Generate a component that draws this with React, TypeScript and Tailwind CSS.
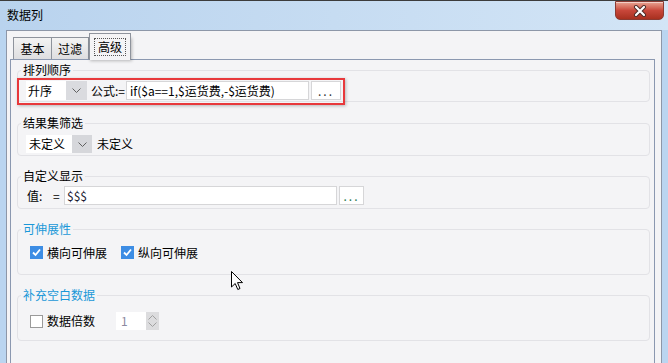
import React from "react";

function Chevron() {
  return (
    <svg width="9" height="5" viewBox="0 0 9 5" fill="none">
      <path d="M0.5 0.5 L4.5 4.5 L8.5 0.5" stroke="#606060" strokeWidth="1" />
    </svg>
  );
}

function Group({
  title,
  blue,
  children,
}: {
  title: string;
  blue?: boolean;
  children: React.ReactNode;
}) {
  return (
    <fieldset className="rounded-[4px] border border-[#e2e2e6] p-0 m-0 min-w-0">
      <legend
        className={
          blue
            ? "ml-[3px] px-[2px] text-[12px] leading-[14px] text-[#1a98d8]"
            : "ml-[3px] px-[2px] text-[12px] leading-[14px] text-black"
        }
      >
        {title}
      </legend>
      {children}
    </fieldset>
  );
}

function CheckBox({ checked }: { checked?: boolean }) {
  if (checked) {
    return (
      <span className="flex h-[13px] w-[13px] items-center justify-center bg-[#3d8de4]">
        <svg width="11" height="11" viewBox="0 0 11 11" fill="none">
          <path d="M2 5.5 L4.5 8 L9 2.5" stroke="white" strokeWidth="1.8" />
        </svg>
      </span>
    );
  }
  return <span className="h-[13px] w-[13px] border border-[#9a9a9a] bg-white" />;
}

export default function App() {
  return (
    <div className="relative flex h-[363px] w-[668px] flex-col overflow-hidden border-t border-[#3c3c3c] bg-[#bad5f0] font-['Noto_Sans_CJK_SC',sans-serif] text-[12px] text-black">
      {/* title bar */}
      <div className="flex h-[29px] items-start justify-between bg-gradient-to-r from-[#b9d3ee] via-[#c6dcf2] to-[#d3e5f6]">
        <div className="pl-[7px] pt-[7px] leading-[14px]">数据列</div>
        <div className="mr-[4px] flex h-[19px] w-[49px] items-center justify-center rounded-b-[5px] border border-[#8a3a32] bg-gradient-to-b from-[#e8a393] via-[#c8473a] to-[#a8301f] shadow-[inset_0_1px_0_rgba(255,255,255,0.5)]">
          <svg width="14" height="12" viewBox="0 0 14 12">
            <path d="M3 2 L11 10 M11 2 L3 10" stroke="#4a2a26" strokeWidth="4" strokeLinecap="round" />
            <path d="M3 2 L11 10 M11 2 L3 10" stroke="white" strokeWidth="2.2" strokeLinecap="round" />
          </svg>
        </div>
      </div>

      {/* client area */}
      <div className="ml-[6px] mr-[6px] flex flex-1 flex-col border-l border-r border-t border-[#8d97a8] bg-[#f4f4f6]">
        {/* tabs */}
        <div className="flex h-[28px] items-end pl-[6px]">
          <div className="flex h-[22px] w-[39px] items-center justify-center border border-b-0 border-[#8e939c] bg-gradient-to-b from-[#f3f3f3] to-[#dedee0] leading-[14px]">
            基本
          </div>
          <div className="-ml-px flex h-[22px] w-[38px] items-center justify-center border border-b-0 border-[#8e939c] bg-gradient-to-b from-[#f3f3f3] to-[#dedee0] leading-[14px]">
            过滤
          </div>
          <div className="relative z-10 -mb-px flex h-[27px] w-[42px] items-start justify-center border border-b-0 border-[#8e939c] bg-[#f4f4f6] pt-[4px]">
            <span className="border border-dotted border-[#555] px-[3px] py-[1px] leading-[14px]">高级</span>
          </div>
        </div>

        {/* tab panel */}
        <div className="ml-[3px] mr-[6px] flex flex-1 flex-col border-l border-r border-t border-[#8b98b0] bg-[#f4f4f6] pl-[6px] pr-[4px] pt-[3px]">
          <Group title="排列顺序">
            <div className="flex items-center pb-[1px] pl-[8px] pt-[4px]">
              <div className="flex h-[19px] w-[40px] items-center bg-white pl-[2px] leading-[14px]">升序</div>
              <div className="flex h-[19px] w-[21px] items-center justify-center bg-[#dadbdf]">
                <Chevron />
              </div>
              <span className="ml-[4px] leading-[14px]">公式:=</span>
              <div className="ml-[1px] flex h-[19px] w-[183px] items-center border border-[#d6d6d8] bg-white pl-[3px] leading-[14px]">
                if($a==1,$运货费,-$运货费)
              </div>
              <div className="ml-[2px] flex h-[19px] w-[30px] items-center justify-center border border-[#d6d6d8] bg-white leading-[14px] tracking-[2px] text-[#333]">
                ...
              </div>
            </div>
          </Group>

          <div className="mt-[14px]">
            <Group title="结果集筛选">
              <div className="flex items-center pb-[2px] pl-[8px] pt-[5px]">
                <div className="flex h-[18px] w-[46px] items-center bg-white pl-[3px] leading-[14px]">未定义</div>
                <div className="flex h-[18px] w-[20px] items-center justify-center bg-[#d6d7db]">
                  <Chevron />
                </div>
                <span className="ml-[5px] leading-[14px]">未定义</span>
              </div>
            </Group>
          </div>

          <div className="mt-[13px]">
            <Group title="自定义显示">
              <div className="flex items-center pb-[3px] pl-[9px] pt-[3px]">
                <span className="w-[26px] leading-[14px]">值:</span>
                <span className="w-[10px] leading-[14px]">=</span>
                <div className="ml-[1px] flex h-[19px] w-[273px] items-center border border-[#d6d6d8] bg-white pl-[2px] leading-[14px] text-[#1b1b33]">
                  $$$
                </div>
                <div className="ml-[2px] flex h-[19px] w-[25px] items-center justify-center border border-[#d6d6d8] bg-white leading-[14px] tracking-[2px] text-[#2a7a50]">
                  ...
                </div>
              </div>
            </Group>
          </div>

          <div className="mt-[13px]">
            <Group title="可伸展性" blue>
              <div className="flex items-center pb-[15px] pl-[12px] pt-[10px]">
                <CheckBox checked />
                <span className="ml-[4px] leading-[13px]">横向可伸展</span>
                <span className="ml-[14px]">
                  <CheckBox checked />
                </span>
                <span className="ml-[4px] leading-[13px]">纵向可伸展</span>
              </div>
            </Group>
          </div>

          <div className="mt-[13px]">
            <Group title="补充空白数据" blue>
              <div className="flex items-center pb-[10px] pl-[12px] pt-[10px]">
                <CheckBox />
                <span className="ml-[4px] leading-[14px]">数据倍数</span>
                <div className="ml-[21px] flex h-[18px]">
                  <div className="flex w-[30px] items-center bg-white pl-[5px] leading-[14px] text-[#8c8aa0]">1</div>
                  <div className="flex w-[13px] flex-col items-center justify-around bg-[#dcdcde] py-[2px]">
                    <svg width="9" height="5" viewBox="0 0 9 5" fill="none">
                      <path d="M0.5 4.5 L4.5 0.5 L8.5 4.5" stroke="#a0a0a0" />
                    </svg>
                    <svg width="9" height="5" viewBox="0 0 9 5" fill="none">
                      <path d="M0.5 0.5 L4.5 4.5 L8.5 0.5" stroke="#a0a0a0" />
                    </svg>
                  </div>
                </div>
              </div>
            </Group>
          </div>
        </div>
      </div>

      {/* red highlight annotations */}
      <div className="pointer-events-none absolute left-[89px] top-[36px] h-[23px] w-[42px] border-2 border-[#e8393c] shadow-[1px_1px_3px_rgba(0,0,0,0.25)]" />
      <div className="pointer-events-none absolute left-[17px] top-[77px] h-[27px] w-[328px] border-2 border-[#e8393c] shadow-[1px_1px_3px_rgba(0,0,0,0.25)]" />

      {/* mouse cursor */}
      <svg className="absolute left-[231px] top-[270px]" width="13" height="20" viewBox="0 0 13 20">
        <path d="M0.5 0.5 L0.5 16 L4.2 12.5 L6.8 18.5 L9 17.5 L6.5 11.6 L11.5 11.6 Z" fill="white" stroke="black" strokeWidth="1" />
      </svg>
    </div>
  );
}
